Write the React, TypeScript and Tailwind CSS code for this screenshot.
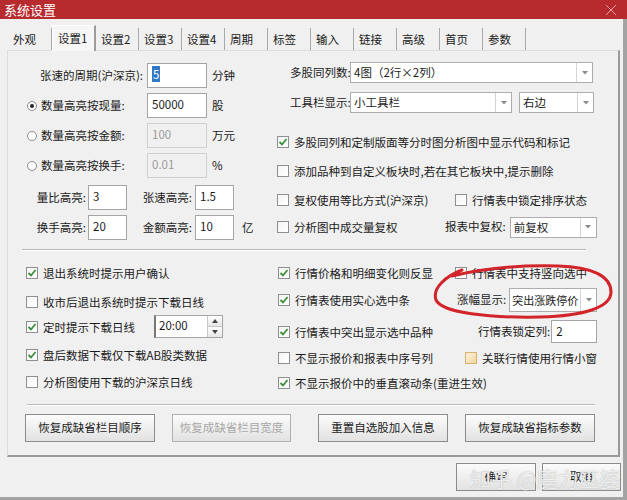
import React from "react";

const F = "font-['Noto_Sans_CJK_SC',sans-serif]";

function Check({ checked = false, beige = false }: { checked?: boolean; beige?: boolean }) {
  return (
    <div
      className={
        "w-[12px] h-[12px] shrink-0 border flex items-center justify-center " +
        (beige
          ? "border-[#d8b070] bg-gradient-to-br from-[#fff3dc] to-[#f1d49f]"
          : "border-[#8e8f8f] bg-gradient-to-br from-[#f4f4f4] to-[#ffffff]")
      }
    >
      {checked && (
        <svg width="10" height="10" viewBox="0 0 10 10">
          <path d="M1.5 5 L4 7.5 L8.5 2" fill="none" stroke="#3a8f3a" strokeWidth="1.8" />
        </svg>
      )}
    </div>
  );
}

function Radio({ on = false }: { on?: boolean }) {
  return (
    <div className="w-[10px] h-[10px] shrink-0 rounded-full border border-[#8a8a8a] bg-white flex items-center justify-center">
      {on && <div className="w-[4px] h-[4px] rounded-full bg-[#222]" />}
    </div>
  );
}

function Input({ value, w, disabled = false, sel = false, h = "h-[25px]" }: { value: string; w: string; disabled?: boolean; sel?: boolean; h?: string }) {
  return (
    <div
      className={
        `${w} ${h} shrink-0 border pl-[4px] pt-[2px] text-[11.5px] leading-[16px] ` +
        (disabled ? "border-[#cfcfcf] bg-[#f0f0f0] text-[#9a9a9a]" : "border-[#a5a5a5] bg-white text-[#1a1a1a]")
      }
    >
      {sel ? <span className="bg-[#3178c6] text-white px-[1px]">{value}</span> : value}
    </div>
  );
}

function Combo({ value, w }: { value: string; w: string }) {
  return (
    <div className={`${w} h-[21px] shrink-0 border border-[#adadad] bg-white flex`}>
      <div className="flex-1 pl-[3px] text-[11.5px] leading-[19px] text-[#1a1a1a] whitespace-nowrap overflow-hidden">{value}</div>
      <div className="w-[16px] border-l border-[#d4d4d4] flex items-center justify-center">
        <svg width="6" height="4" viewBox="0 0 6 4">
          <path d="M0 0 L6 0 L3 3.5 Z" fill="#8a8a8a" />
        </svg>
      </div>
    </div>
  );
}

function CB({ checked = false, text, beige = false }: { checked?: boolean; text: string; beige?: boolean }) {
  return (
    <div className="flex items-center">
      <Check checked={checked} beige={beige} />
      <span className="ml-[5px] text-[11.5px] leading-[16px] text-[#1a1a1a] whitespace-nowrap">{text}</span>
    </div>
  );
}

function Btn({ text, w, disabled = false }: { text: string; w: string; disabled?: boolean }) {
  return (
    <div
      className={
        `${w} h-[28px] shrink-0 border border-[#8c8c8c] bg-gradient-to-b from-[#fbfbfb] to-[#e2e2e2] flex items-center justify-center text-[11.5px] whitespace-nowrap ` +
        (disabled ? "text-[#a8a8a8] border-[#b0b0b0]" : "text-[#1a1a1a]")
      }
    >
      {text}
    </div>
  );
}

const tabs = ["外观", "设置1", "设置2", "设置3", "设置4", "周期", "标签", "输入", "链接", "高级", "首页", "参数"];

export default function App() {
  return (
    <div className={`${F} relative w-[627px] h-[500px] overflow-hidden bg-[#f0f0f0] text-[#1a1a1a]`}>
      {/* title bar */}
      <div className="h-[19px] bg-[#b72a2e] flex items-center justify-between px-[4px]">
        <span className="text-white text-[13px] leading-[19px]">系统设置</span>
        <svg width="12" height="12" viewBox="0 0 12 12" className="mr-[6px]">
          <path d="M1 1 L11 11 M11 1 L1 11" stroke="#e8a0a0" strokeWidth="1" />
        </svg>
      </div>

      <div className="flex">
        <div className="w-[623px]">
          {/* tabs */}
          <div className="h-[31px] pl-[8px] flex items-end">
            {tabs.map((t, i) =>
              i === 1 ? (
                <div
                  key={t}
                  className="w-[44px] h-[26px] border-l border-t border-white border-r-2 border-r-[#9c9c9c] bg-[#f6f6f6] pl-[5px] pt-[4px] text-[11.5px] leading-[16px] -mb-[1px] relative z-10"
                >
                  {t}
                </div>
              ) : (
                <div
                  key={t}
                  className={
                    "h-[22px] pl-[5px] pt-[3px] text-[11.5px] leading-[16px] border-r border-[#a8a8a8] " +
                    (i === 0 ? "w-[44px]" : "w-[43px]")
                  }
                >
                  {t}
                </div>
              )
            )}
          </div>

          {/* panel */}
          <div className="ml-[7px] w-[613px] h-[407px] border-l border-t border-[#dcdcdc] border-r-2 border-b-2 border-r-[#9a9a9a] border-b-[#9a9a9a] bg-[#f0f0f0]">
            {/* top section */}
            <div className="h-[198px] flex">
              {/* left column */}
              <div className="w-[262px] pt-[12px]">
                <div className="flex items-center h-[25px]">
                  <div className="w-[139px] pr-[4px] text-right text-[11.5px] whitespace-nowrap">张速的周期(沪深京):</div>
                  <Input value="5" w="w-[60px]" sel />
                  <span className="ml-[5px] text-[11.5px]">分钟</span>
                </div>
                {[
                  { l: "数量高亮按现量:", v: "50000", u: "股", on: true },
                  { l: "数量高亮按金额:", v: "100", u: "万元", on: false },
                  { l: "数量高亮按换手:", v: "0.01", u: "%", on: false },
                ].map((r) => (
                  <div key={r.l} className="flex items-center h-[25px] mt-[5px]">
                    <div className="w-[139px] pl-[19px] flex items-center">
                      <Radio on={r.on} />
                      <span className="ml-[4px] text-[11.5px] whitespace-nowrap">{r.l}</span>
                    </div>
                    <Input value={r.v} w="w-[60px]" disabled={!r.on} />
                    <span className="ml-[5px] text-[11.5px]">{r.u}</span>
                  </div>
                ))}
                <div className="flex items-center h-[25px] mt-[7px]">
                  <div className="w-[80px] pr-[2px] text-right text-[11.5px]">量比高亮:</div>
                  <Input value="3" w="w-[39px]" />
                  <div className="w-[68px] pr-[3px] text-right text-[11.5px]">张速高亮:</div>
                  <Input value="1.5" w="w-[39px]" />
                </div>
                <div className="flex items-center h-[25px] mt-[5px]">
                  <div className="w-[80px] pr-[2px] text-right text-[11.5px]">换手高亮:</div>
                  <Input value="20" w="w-[39px]" />
                  <div className="w-[68px] pr-[3px] text-right text-[11.5px]">金额高亮:</div>
                  <Input value="10" w="w-[39px]" />
                  <span className="ml-[8px] text-[11.5px]">亿</span>
                </div>
              </div>

              {/* right column */}
              <div className="flex-1 pt-[11px]">
                <div className="flex items-center h-[21px]">
                  <div className="w-[80px] pl-[20px] text-[11.5px] whitespace-nowrap">多股同列数:</div>
                  <Combo value="4图（2行×2列）" w="w-[243px]" />
                </div>
                <div className="flex items-center h-[21px] mt-[9px]">
                  <div className="w-[80px] pl-[20px] text-[11.5px] whitespace-nowrap">工具栏显示:</div>
                  <Combo value="小工具栏" w="w-[162px]" />
                  <div className="ml-[7px]">
                    <Combo value="右边" w="w-[75px]" />
                  </div>
                </div>
                <div className="h-[16px] mt-[21px] pl-[7px] flex items-center">
                  <CB checked text="多股同列和定制版面等分时图分析图中显示代码和标记" />
                </div>
                <div className="h-[16px] mt-[13px] pl-[7px] flex items-center">
                  <CB text="添加品种到自定义板块时,若在其它板块中,提示删除" />
                </div>
                <div className="h-[16px] mt-[13px] pl-[7px] flex items-center">
                  <div className="w-[178px]">
                    <CB text="复权使用等比方式(沪深京)" />
                  </div>
                  <CB text="行情表中锁定排序状态" />
                </div>
                <div className="h-[22px] mt-[8px] pl-[7px] flex items-center">
                  <div className="w-[168px]">
                    <CB text="分析图中成交量复权" />
                  </div>
                  <span className="text-[11.5px] whitespace-nowrap">报表中复权:</span>
                  <div className="ml-[4px]">
                    <Combo value="前复权" w="w-[87px]" />
                  </div>
                </div>
              </div>
            </div>

            {/* separator */}
            <div className="ml-[14px] w-[564px] h-[2px] border-t border-[#b9b9b9] border-b border-b-white" />

            {/* lower section */}
            <div className="h-[153px] flex">
              <div className="w-[262px]">
                <div className="h-[16px] mt-[14px] pl-[18px] flex items-center">
                  <CB checked text="退出系统时提示用户确认" />
                </div>
                <div className="h-[16px] mt-[13px] pl-[18px] flex items-center">
                  <CB text="收市后退出系统时提示下载日线" />
                </div>
                <div className="h-[23px] mt-[5px] pl-[18px] flex items-center">
                  <div className="w-[128px]">
                    <CB checked text="定时提示下载日线" />
                  </div>
                  <div className="w-[69px] h-[23px] border border-[#a5a5a5] border-l-2 border-l-[#777] bg-white flex">
                    <div className="flex-1 pl-[3px] pt-[1px] text-[11.5px] leading-[16px]">20:00</div>
                    <div className="w-[15px] flex flex-col border-l border-[#c8c8c8]">
                      <div className="flex-1 flex items-center justify-center bg-gradient-to-b from-white to-[#e6e6e6] border-b border-[#c8c8c8]">
                        <svg width="6" height="4" viewBox="0 0 6 4"><path d="M0 4 L6 4 L3 0 Z" fill="#444" /></svg>
                      </div>
                      <div className="flex-1 flex items-center justify-center bg-gradient-to-b from-white to-[#e6e6e6]">
                        <svg width="6" height="4" viewBox="0 0 6 4"><path d="M0 0 L6 0 L3 4 Z" fill="#444" /></svg>
                      </div>
                    </div>
                  </div>
                </div>
                <div className="h-[16px] mt-[9px] pl-[18px] flex items-center">
                  <CB checked text="盘后数据下载仅下载AB股类数据" />
                </div>
                <div className="h-[16px] mt-[11px] pl-[18px] flex items-center">
                  <CB text="分析图使用下载的沪深京日线" />
                </div>
              </div>

              <div className="flex-1">
                <div className="h-[16px] mt-[14px] pl-[8px] flex items-center">
                  <div className="w-[177px]">
                    <CB checked text="行情价格和明细变化则反显" />
                  </div>
                  <CB text="行情表中支持竖向选中" />
                </div>
                <div className="h-[24px] mt-[7px] pl-[8px] flex items-center">
                  <div className="w-[179px]">
                    <CB checked text="行情表使用实心选中条" />
                  </div>
                  <span className="text-[11.5px] whitespace-nowrap">涨幅显示:</span>
                  <div className="ml-[3px] w-[88px] h-[24px] border border-[#adadad] bg-white flex">
                    <div className="flex-1 pl-[2px] text-[11px] leading-[22px] whitespace-nowrap">突出涨跌停价</div>
                    <div className="w-[16px] border-l border-[#d4d4d4] flex items-center justify-center">
                      <svg width="6" height="4" viewBox="0 0 6 4"><path d="M0 0 L6 0 L3 3.5 Z" fill="#8a8a8a" /></svg>
                    </div>
                  </div>
                </div>
                <div className="h-[23px] mt-[8px] pl-[8px] flex items-center">
                  <div className="w-[200px]">
                    <CB checked text="行情表中突出显示选中品种" />
                  </div>
                  <span className="text-[11.5px] whitespace-nowrap">行情表锁定列:</span>
                  <div className="ml-[1px]">
                    <Input value="2" w="w-[46px]" h="h-[23px]" />
                  </div>
                </div>
                <div className="h-[16px] mt-[7px] pl-[8px] flex items-center">
                  <div className="w-[187px]">
                    <CB text="不显示报价和报表中序号列" />
                  </div>
                  <CB beige text="关联行情使用行情小窗" />
                </div>
                <div className="h-[16px] mt-[9px] pl-[8px] flex items-center">
                  <CB checked text="不显示报价中的垂直滚动条(重进生效)" />
                </div>
              </div>
            </div>

            {/* separator 2 */}
            <div className="ml-[19px] w-[568px] h-[2px] border-t border-[#b9b9b9] border-b border-b-white" />

            <div className="mt-[8px] pl-[17px] flex">
              <Btn text="恢复成缺省栏目顺序" w="w-[130px]" />
              <div className="ml-[17px]">
                <Btn text="恢复成缺省栏目宽度" w="w-[119px]" disabled />
              </div>
              <div className="ml-[27px]">
                <Btn text="重置自选股加入信息" w="w-[130px]" />
              </div>
              <div className="ml-[17px]">
                <Btn text="恢复成缺省指标参数" w="w-[130px]" />
              </div>
            </div>
          </div>

          {/* OK / Cancel */}
          <div className="mt-[6px] flex justify-end pr-[2px]">
            <div className="w-[80px] h-[28px] border border-[#8c8c8c] bg-gradient-to-b from-[#fbfbfb] to-[#e2e2e2] flex items-center justify-center text-[11.5px]">确定</div>
            <div className="ml-[6px] w-[79px] h-[28px] border border-[#8c8c8c] bg-gradient-to-b from-[#fbfbfb] to-[#e2e2e2] flex items-center justify-center text-[11.5px]">取消</div>
          </div>
        </div>
        {/* right window border */}
        <div className="w-[4px] h-[481px] bg-[#a3a3a3]" />
      </div>

      {/* bottom window border */}
      <div className="absolute left-0 right-0 bottom-0 h-[3px] bg-[#a3a3a3]" />

      {/* red hand-drawn annotation */}
      <svg className="absolute left-0 top-0 pointer-events-none" width="627" height="500" viewBox="0 0 627 500">
        <path
          d="M462 270 C 446 276, 432 288, 436 300 C 442 313, 490 318, 540 317 C 585 316, 611 307, 611 292 C 611 276, 592 267, 558 266 C 520 265, 488 267, 452 276"
          fill="none"
          stroke="#d2242a"
          strokeWidth="3"
          strokeLinecap="round"
        />
      </svg>

      {/* watermark */}
      <div className="absolute left-[470px] top-[464px] text-[21px] leading-[28px] text-white/80 whitespace-nowrap [text-shadow:0_0_1px_#999]">
        知乎 @魔力巫婆
      </div>
    </div>
  );
}
